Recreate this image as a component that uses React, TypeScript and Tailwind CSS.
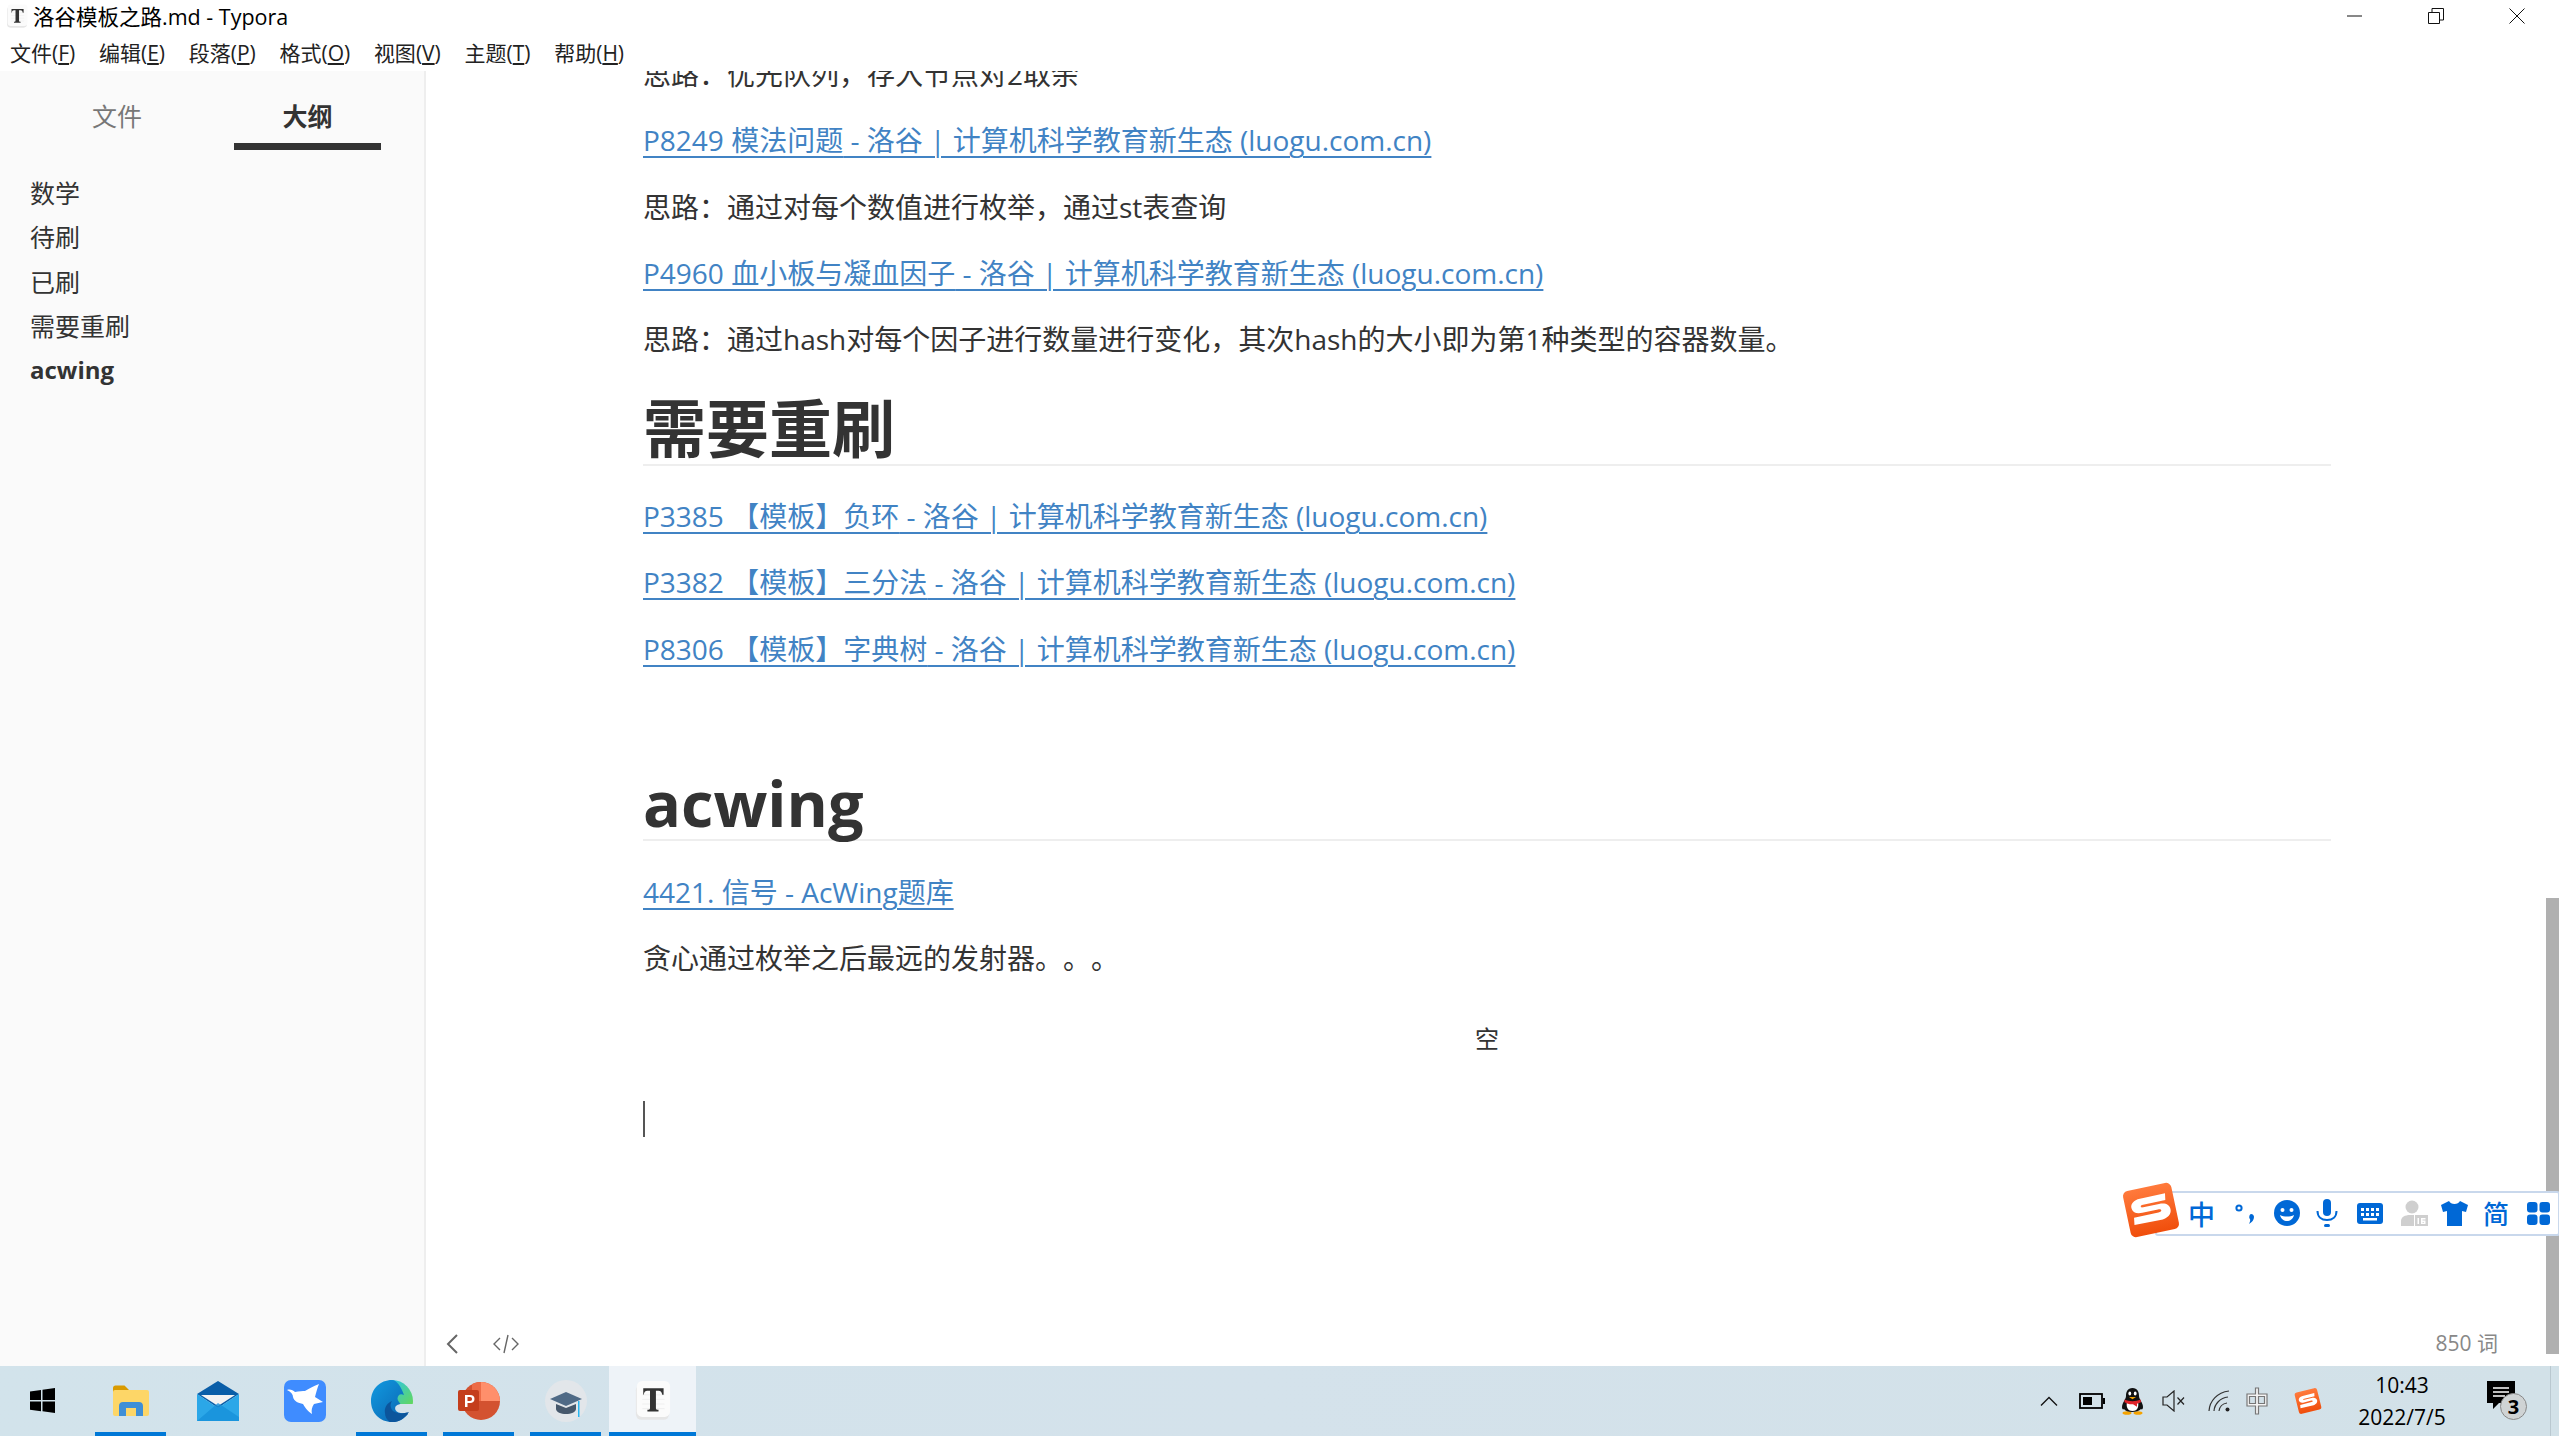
import React from "react";

const UI_FONT = "font-['Open_Sans','Noto_Sans_CJK_SC',sans-serif]";

const MENUS = [
  ["文件", "F"],
  ["编辑", "E"],
  ["段落", "P"],
  ["格式", "O"],
  ["视图", "V"],
  ["主题", "T"],
  ["帮助", "H"],
];

const OUTLINE = ["数学", "待刷", "已刷", "需要重刷"];

const LUOGU = " - 洛谷 | 计算机科学教育新生态 (luogu.com.cn)";

const TyporaIcon = ({ size }: { size: number }) => (
  <svg width={size} height={size * 1.1} viewBox="0 0 40 44">
    <rect x="2" y="5" width="36" height="38" rx="6" fill="#e6e6e6" />
    <rect x="3" y="1" width="36" height="39" rx="6" fill="#fbfbfb" />
    <path d="M9 16h24M9 21h24M9 26h24M9 31h24" stroke="#eeeeee" strokeWidth="1" />
    <path
      d="M10 9h22v7h-1.500c-.5-3-1.500-4.500-4-4.500h-2.800v19c0 1.300.7 1.700 2.800 1.800V34H14.500v-1.700c2.100-.1 2.800-.5 2.800-1.800v-19h-2.800c-2.500 0-3.500 1.500-4 4.500H10z"
      fill="#333"
    />
  </svg>
);

const SogouLogo = ({ size, rotate }: { size: number; rotate: number }) => (
  <svg width={size} height={size} viewBox="0 0 56 56" style={{ transform: `rotate(${rotate}deg)` }}>
    <defs>
      <linearGradient id={`sg${size}`} x1="0" y1="0" x2="0" y2="1">
        <stop offset="0" stopColor="#ff7a3c" />
        <stop offset="1" stopColor="#f04e0c" />
      </linearGradient>
    </defs>
    <rect x="5" y="6" width="46" height="44" rx="5" fill={`url(#sg${size})`} />
    <path
      d="M44 15.500H20c-6 0-9.500 3-9.500 6.800 0 4.200 3.500 6.500 9 6.500h15c2 0 2.800.7 2.800 1.500s-.9 1.500-3 1.500H11l-1 6.700 24.500.5c7 0 11.500-3.200 11.500-8 0-4.500-3.500-7-9.500-7H21.500c-1.500 0-2.200-.5-2.200-1.200s.8-1.100 2.500-1.100H43z"
      fill="#fff"
    />
  </svg>
);

const TrayIcons = () => (
  <>
    <svg width="18" height="10" viewBox="0 0 18 10" className="mr-[21px]">
      <path d="M1 9.500 9 1.500l8 8" fill="none" stroke="#111" strokeWidth="1.300" />
    </svg>
    <svg width="26" height="16" viewBox="0 0 26 16" className="mr-[16px]">
      <rect x="1" y="1" width="22" height="14" fill="none" stroke="#000" strokeWidth="1.800" />
      <rect x="4" y="4" width="9" height="8" fill="#000" />
      <rect x="24" y="5" width="2" height="6" fill="#000" />
    </svg>
    <svg width="23" height="28" viewBox="0 0 23 28" className="mr-[18px]">
      <ellipse cx="6" cy="26" rx="4.500" ry="1.800" fill="#f5a300" />
      <ellipse cx="17" cy="26" rx="4.500" ry="1.800" fill="#f5a300" />
      <path d="M11.500 1C6.500 1 5 5 5 9c0 3-4 7-4 11 0 2 1 3 2 2 2 4 14 4 17 0 1 1 2 0 2-2 0-4-4-8-4-11 0-4-1.500-8-6.500-8z" fill="#111" />
      <path d="M6 15c-1 4 0 9 5.500 9S18 19 17 15z" fill="#fff" />
      <path d="M3.500 12.500c5 2.200 11 2.200 16 0l.5 2.800-4 1.500v3l-4-2.500c-3 .3-6-.5-8.500-2z" fill="#e0242a" />
      <ellipse cx="8.800" cy="6.500" rx="1.400" ry="2" fill="#fff" />
      <ellipse cx="14.200" cy="6.500" rx="1.400" ry="2" fill="#fff" />
      <path d="M8 10h7l-3.500 2.200z" fill="#f5a300" />
    </svg>
    <svg width="23" height="22" viewBox="0 0 23 22" className="mr-[23px]">
      <path d="M1 7h4l7-6v20l-7-6H1z" fill="none" stroke="#222" strokeWidth="1.200" />
      <path d="M15.500 7.500l6.500 7M22 7.500l-6.500 7" stroke="#222" strokeWidth="1.200" />
    </svg>
    <svg width="22" height="22" viewBox="0 0 22 22" className="mr-[16px]">
      <path d="M1 21C1.500 11 9 2.500 21 1" fill="none" stroke="#333" strokeWidth="1.200" />
      <path d="M6 21C6.500 14 12 8 20 7" fill="none" stroke="#333" strokeWidth="1.200" />
      <path d="M11 21c.5-4 3.500-7.500 8-8" fill="none" stroke="#333" strokeWidth="1.200" />
      <circle cx="19.500" cy="19.500" r="2" fill="#222" />
    </svg>
    <svg width="22" height="28" viewBox="0 0 22 28" className="mr-[26px]">
      <path
        d="M9.500 1h3v6H21v12h-8.500v8h-3v-8H1V7h8.500zM3.500 9.500v7h6v-7zm9 0v7h6v-7z"
        fill="#f4f4f4"
        stroke="#777"
        strokeWidth="1.200"
      />
    </svg>
    <div className="mr-[28px] flex w-[28px] justify-center">
      <SogouLogo size={34} rotate={-14} />
    </div>
  </>
);

const AppIcons = [
  // start
  <svg key="start" width="25" height="25" viewBox="0 0 25 25" className="-ml-[3px]">
    <path d="M0 3.500 11 2v10H0zM12.500 1.800 25 0v12H12.500zM0 13.500h11v9.800L0 21.800zM12.500 13.500H25V25l-12.500-1.800z" fill="#000" />
  </svg>,
  // explorer
  <svg key="files" width="37" height="32" viewBox="0 0 37 32">
    <path d="M1 3c0-1.500 1-2.500 2.500-2.500h9L17 5v3H1z" fill="#d99a00" />
    <rect x="1" y="5" width="36" height="26" rx="2" fill="#fdd667" />
    <path d="M7 31V21c0-2.500 1.500-4 4-4h16c2.500 0 4 1.500 4 4v10h-7v-8H14v8z" fill="#3f8fd6" />
  </svg>,
  // mail
  <svg key="mail" width="42" height="40" viewBox="0 0 42 40">
    <path d="M0 13 21 0l21 13-21 14z" fill="#0a5ea8" />
    <path d="M4 14h34L21 25z" fill="#f3f3f3" />
    <path d="M0 13l21 14 21-14v27H0z" fill="#2ba7e8" />
    <path d="M0 40h42V36L21 22z" fill="#1791d9" opacity=".8" />
  </svg>,
  // bird app
  <svg key="bird" width="42" height="42" viewBox="0 0 42 42">
    <rect width="42" height="42" rx="7" fill="#3f8cff" />
    <path d="M3 10c3-1 6 0 8 2 4-1 8-1 10-1 4-2 8-5 14-7-2 5-3 9-4 13l8 5-9 2c-2 3-3 6-2 10-5-3-7-7-9-10-5-1-9-3-10-7 0-3-2-5-6-7z" fill="#fff" />
  </svg>,
  // edge
  <svg key="edge" width="42" height="42" viewBox="0 0 42 42">
    <defs>
      <linearGradient id="edgeA" x1="0" y1="0" x2="1" y2="1">
        <stop offset="0" stopColor="#2fc4e8" />
        <stop offset="1" stopColor="#63d85c" />
      </linearGradient>
      <linearGradient id="edgeB" x1="0" y1="0" x2="1" y2="1">
        <stop offset="0" stopColor="#119ae0" />
        <stop offset="1" stopColor="#0b63b0" />
      </linearGradient>
    </defs>
    <path d="M21 0a21 21 0 0 1 21 21c0 1-.1 2-.3 3H21z" fill="url(#edgeA)" />
    <path d="M21 0C9 0 0 9 0 21s9 21 21 21c7 0 12-3 16-8l-9-12c-2-2-2-5 0-7 1-1 3-1 5 0C30 7 26 0 21 0z" fill="url(#edgeB)" />
    <path d="M42 24H31c-5 0-8 2.500-6.500 6 2 3.500 8 4 15.500 2z" fill="#d4e2eb" />
    <path d="M19 42c7 1 13-2 19-10-6 2-12 2-16-1-3-3-3-7-1-10-5 2-8 7-7 12 0 4 2 7 5 9z" fill="#0c559c" />
  </svg>,
  // powerpoint
  <svg key="ppt" width="42" height="38" viewBox="0 0 42 38">
    <circle cx="23" cy="19" r="19" fill="#d35230" />
    <path d="M23 0a19 19 0 0 1 19 19H23z" fill="#ff8f6b" />
    <path d="M23 0v19h-9V2.300C16.500.8 19.500 0 23 0z" fill="#ed6c47" />
    <rect y="8" width="21" height="21" rx="2" fill="#c43e1c" />
    <path d="M7 13h5c3 0 4.500 1.500 4.500 4s-1.800 4-4.500 4H9.500v4H7zm2.500 2v4H12c1.500 0 2-.8 2-2s-.6-2-2-2z" fill="#fff" />
  </svg>,
  // cap
  <svg key="cap" width="42" height="42" viewBox="0 0 42 42">
    <circle cx="21" cy="21" r="21" fill="#e2e6ea" />
    <path d="M5 19 21 12l16 7-16 7z" fill="#4f6a86" />
    <path d="M11 24v5c0 3 5 5 10 5s10-2 10-5v-5l-10 4z" fill="#46586c" />
    <rect x="33" y="21" width="1.500" height="16" fill="#29b6f0" />
  </svg>,
];

const SogouBarIcons = () => (
  <div className="flex flex-1 items-center text-[#0068d6]">
    <span className="w-[26px] text-center text-[27px] font-medium leading-none font-['Noto_Sans_CJK_SC',sans-serif] ml-[11px] mr-[20px]">中</span>
    <svg width="22" height="24" viewBox="0 0 22 24" className="mr-[18px]">
      <circle cx="5" cy="7" r="2.600" fill="none" stroke="currentColor" strokeWidth="2" />
      <path d="M17 13c2 0 3 1.500 3 3 0 3-2 5-5 7 1-2 1.500-3.500 1-5-1.500-1-.5-5 1-5z" fill="currentColor" />
    </svg>
    <svg width="26" height="26" viewBox="0 0 26 26" className="mr-[16px]">
      <circle cx="13" cy="13" r="13" fill="currentColor" />
      <circle cx="8.500" cy="10" r="2" fill="#fff" />
      <circle cx="17.500" cy="10" r="2" fill="#fff" />
      <path d="M6 15c4 2 10 2 14 0-1 4-4 6-7 6s-6-2-7-6z" fill="#fff" />
    </svg>
    <svg width="22" height="28" viewBox="0 0 22 28" className="mr-[19px]">
      <rect x="7" y="0" width="8" height="17" rx="4" fill="currentColor" />
      <path d="M1.500 12c0 6 4 9 9.500 9s9.500-3 9.500-9" fill="none" stroke="currentColor" strokeWidth="2" />
      <rect x="8" y="25" width="6" height="3" rx="1.500" fill="currentColor" />
    </svg>
    <svg width="26" height="21" viewBox="0 0 26 21" className="mr-[18px]">
      <rect width="26" height="21" rx="3" fill="currentColor" />
      <path d="M4 5h3v3H4zM9 5h3v3H9zM14 5h3v3h-3zM19 5h3v3h-3zM4 10h3v3H4zM9 10h3v3H9zM14 10h3v3h-3zM19 10h3v3h-3zM6 15h14v2.500H6z" fill="#fff" />
    </svg>
    <svg width="27" height="26" viewBox="0 0 27 26" className="mr-[13px]">
      <circle cx="11" cy="7" r="6.500" fill="#cfcfcf" />
      <path d="M0 26v-5c0-4 4-6 9-6h4v11z" fill="#cfcfcf" />
      <rect x="14" y="15" width="13" height="11" fill="#cfcfcf" />
      <path d="M16.500 18h1.500v6h-1.500zM20 18h4.500v1.500H21.500v1h3V24H20zm1.500 4v.8h1.500V22z" fill="#fff" />
    </svg>
    <svg width="27" height="25" viewBox="0 0 27 25" className="mr-[15px]">
      <path d="M8 0c1 2 3 3 5.500 3S18 2 19 0l8 4-2 7-4-1v15H6V10l-4 1-2-7z" fill="currentColor" />
    </svg>
    <span className="w-[26px] text-center text-[26px] font-medium leading-none font-['Noto_Sans_CJK_SC',sans-serif] mr-[18px]">简</span>
    <svg width="23" height="23" viewBox="0 0 23 23">
      <rect width="10.500" height="10.500" rx="3" fill="currentColor" />
      <rect x="12.500" width="10.500" height="10.500" rx="3" fill="currentColor" />
      <rect y="12.500" width="10.500" height="10.500" rx="3" fill="currentColor" />
      <rect x="12.500" y="12.500" width="10.500" height="10.500" rx="3" fill="currentColor" />
    </svg>
  </div>
);

const LinkLine = ({ children }: { children: React.ReactNode }) => (
  <p className="mb-[22.300px] h-[44px] leading-[44px] whitespace-nowrap">
    <a className="text-[#4183c4] underline decoration-2 underline-offset-[5px]">{children}</a>
  </p>
);

const TextLine = ({ children }: { children: React.ReactNode }) => (
  <p className="mb-[22.300px] h-[44px] leading-[44px] whitespace-nowrap [text-spacing-trim:space-all]">{children}</p>
);

export default function App() {
  return (
    <div className={`flex h-[1436px] w-[2559px] flex-col overflow-hidden bg-white text-[#333] ${UI_FONT}`}>
      {/* window title */}
      <div className="flex h-[33px] shrink-0 items-center bg-white text-[21.500px] text-black">
        <div className="ml-[5px] mr-[5px] flex w-[23px] justify-center">
          <TyporaIcon size={22} />
        </div>
        <span className="leading-none">洛谷模板之路.md - Typora</span>
        <div className="ml-auto flex items-center pb-[2px]">
          <svg width="16" height="16" viewBox="0 0 16 16" className="mr-[65px]">
            <path d="M0 8h15" stroke="#111" strokeWidth="1" />
          </svg>
          <svg width="16" height="16" viewBox="0 0 16 16" className="mr-[65px]">
            <path d="M.5 4.500h11v11H.500zM4 4V.5h11.500V12H12" fill="none" stroke="#111" strokeWidth="1" />
          </svg>
          <svg width="16" height="16" viewBox="0 0 16 16" className="mr-[34px]">
            <path d="M.5.5l15 15M15.500.5l-15 15" stroke="#111" strokeWidth="1" />
          </svg>
        </div>
      </div>

      {/* menu */}
      <div className="flex h-[38px] shrink-0 items-center gap-[23.700px] pt-[3px] pl-[10px] text-[21px] text-[#222]">
        {MENUS.map(([name, key]) => (
          <span key={key} className="leading-none">
            {name}(<span className="underline underline-offset-2">{key}</span>)
          </span>
        ))}
      </div>

      <div className="flex min-h-0 flex-1">
        {/* sidebar */}
        <aside className="flex w-[426px] shrink-0 flex-col border-r-2 border-[#eeeeee] bg-[#fafafa] text-[25px]">
          <div className="flex pt-[23px]">
            <div className="flex h-[56px] w-[234px] justify-center text-[#777]">
              <span className="leading-[44px]">文件</span>
            </div>
            <div className="flex h-[56px] w-[147px] justify-center border-b-[7px] border-[#333] font-bold text-[#333]">
              <span className="leading-[44px]">大纲</span>
            </div>
          </div>
          <div className="flex flex-col pl-[30px] pt-[21px]">
            {OUTLINE.map((item) => (
              <div key={item} className="h-[44.300px] leading-[44px]">
                {item}
              </div>
            ))}
            <div className="h-[44px] text-[24px] font-bold leading-[44px]">acwing</div>
          </div>
        </aside>

        {/* editor */}
        <main className="relative flex min-w-0 flex-1 flex-col">
          <div className="min-h-0 flex-1 overflow-hidden pl-[217px] pr-[228px] text-[28px]">
            <div className="-mt-[19px]">
              <TextLine>思路：优先队列，存入节点对2取余</TextLine>
              <LinkLine>P8249 模法问题{LUOGU}</LinkLine>
              <TextLine>思路：通过对每个数值进行枚举，通过st表查询</TextLine>
              <LinkLine>P4960 血小板与凝血因子{LUOGU}</LinkLine>
              <TextLine>思路：通过hash对每个因子进行数量进行变化，其次hash的大小即为第1种类型的容器数量。</TextLine>

              <h1 className="mb-[28px] mt-[30px] h-[75px] border-b-2 border-[#eeeeee] text-[63px] font-bold leading-[74px]">需要重刷</h1>

              <LinkLine>P3385 【模板】负环{LUOGU}</LinkLine>
              <LinkLine>P3382 【模板】三分法{LUOGU}</LinkLine>
              <LinkLine>P8306 【模板】字典树{LUOGU}</LinkLine>
              <div className="h-[65px]" />

              <h1 className="mb-[29px] mt-[8px] h-[75px] border-b-2 border-[#eeeeee] text-[63px] font-bold leading-[74px]">acwing</h1>

              <LinkLine>4421. 信号 - AcWing题库</LinkLine>
              <TextLine>贪心通过枚举之后最远的发射器。。。</TextLine>

              <div className="mt-[41px] text-center text-[24px] leading-[36px]">空</div>
              <div className="mt-[44px] h-[36px] w-[2px] bg-[#555]" />
            </div>
          </div>

          <div className="flex h-[50px] shrink-0 items-center pt-[5px] text-[#777]">
            <svg width="12" height="20" viewBox="0 0 12 20" className="ml-[20px]">
              <path d="M11 1 2 10l9 9" fill="none" stroke="#666" strokeWidth="2" />
            </svg>
            <svg width="26" height="20" viewBox="0 0 26 20" className="ml-[35px]">
              <path d="M7 4 1 10l6 6M19 4l6 6-6 6M15 1l-4 18" fill="none" stroke="#666" strokeWidth="1.400" />
            </svg>
            <span className="ml-auto mr-[61px] text-[21px] text-[#888]">850 词</span>
          </div>

          {/* scrollbar thumb */}
          <div className="absolute bottom-[12px] right-0 h-[456px] w-[13px] bg-[#b0b0b0]" />

          {/* sogou input bar */}
          <div className="absolute left-[1695px] top-[1112px] flex h-[53px] w-[439px] items-center">
            <div className="relative z-10 -mr-[26px] shrink-0">
              <SogouLogo size={60} rotate={-12} />
            </div>
            <div className="mt-[7px] flex h-[45px] flex-1 items-center rounded-[3px] border-2 border-[#c9d8ec] bg-white pl-[20px]">
              <SogouBarIcons />
            </div>
          </div>
        </main>
      </div>

      {/* taskbar */}
      <div className="flex h-[70px] shrink-0 bg-gradient-to-r from-[#d2e3eb] via-[#d4e2eb] to-[#d2e1e8] text-black">
        {AppIcons.map((icon, i) => (
          <div key={i} className="flex w-[87px] flex-col items-center">
            <div className="flex flex-1 items-center justify-center pt-[3px]">{icon}</div>
            {i === 1 || i >= 4 ? (
              <div className="h-[4px] w-[71px] bg-[#0078d7]" />
            ) : (
              <div className="h-[4px]" />
            )}
          </div>
        ))}
        <div className="flex w-[87px] flex-col items-center bg-[#eef3f8]">
          <div className="flex flex-1 items-center justify-center pt-[3px]">
            <TyporaIcon size={37} />
          </div>
          <div className="h-[4px] w-full bg-[#0078d7]" />
        </div>

        <div className="ml-auto flex items-center">
          <TrayIcons />
          <div className="mr-[33px] flex w-[104px] flex-col items-center text-[21px] leading-[32px]">
            <span>10:43</span>
            <span>2022/7/5</span>
          </div>
          <div className="relative mr-[23px] h-[40px] w-[40px]">
            <svg width="28" height="30" viewBox="0 0 28 30" className="absolute left-0 top-0">
              <path d="M0 0h28v22H12l-6 6v-6H0z" fill="#000" />
              <path d="M6 7h16M6 11h16M6 15h12" stroke="#fff" strokeWidth="1.500" />
            </svg>
            <span className="absolute left-[13px] top-[12px] flex h-[27px] w-[27px] items-center justify-center rounded-full border border-[#888] bg-[#cfd3d4] text-[20px] font-bold leading-none">
              3
            </span>
          </div>
          <div className="h-full w-[9px] border-l border-[#b9c8d0]" />
        </div>
      </div>
    </div>
  );
}
